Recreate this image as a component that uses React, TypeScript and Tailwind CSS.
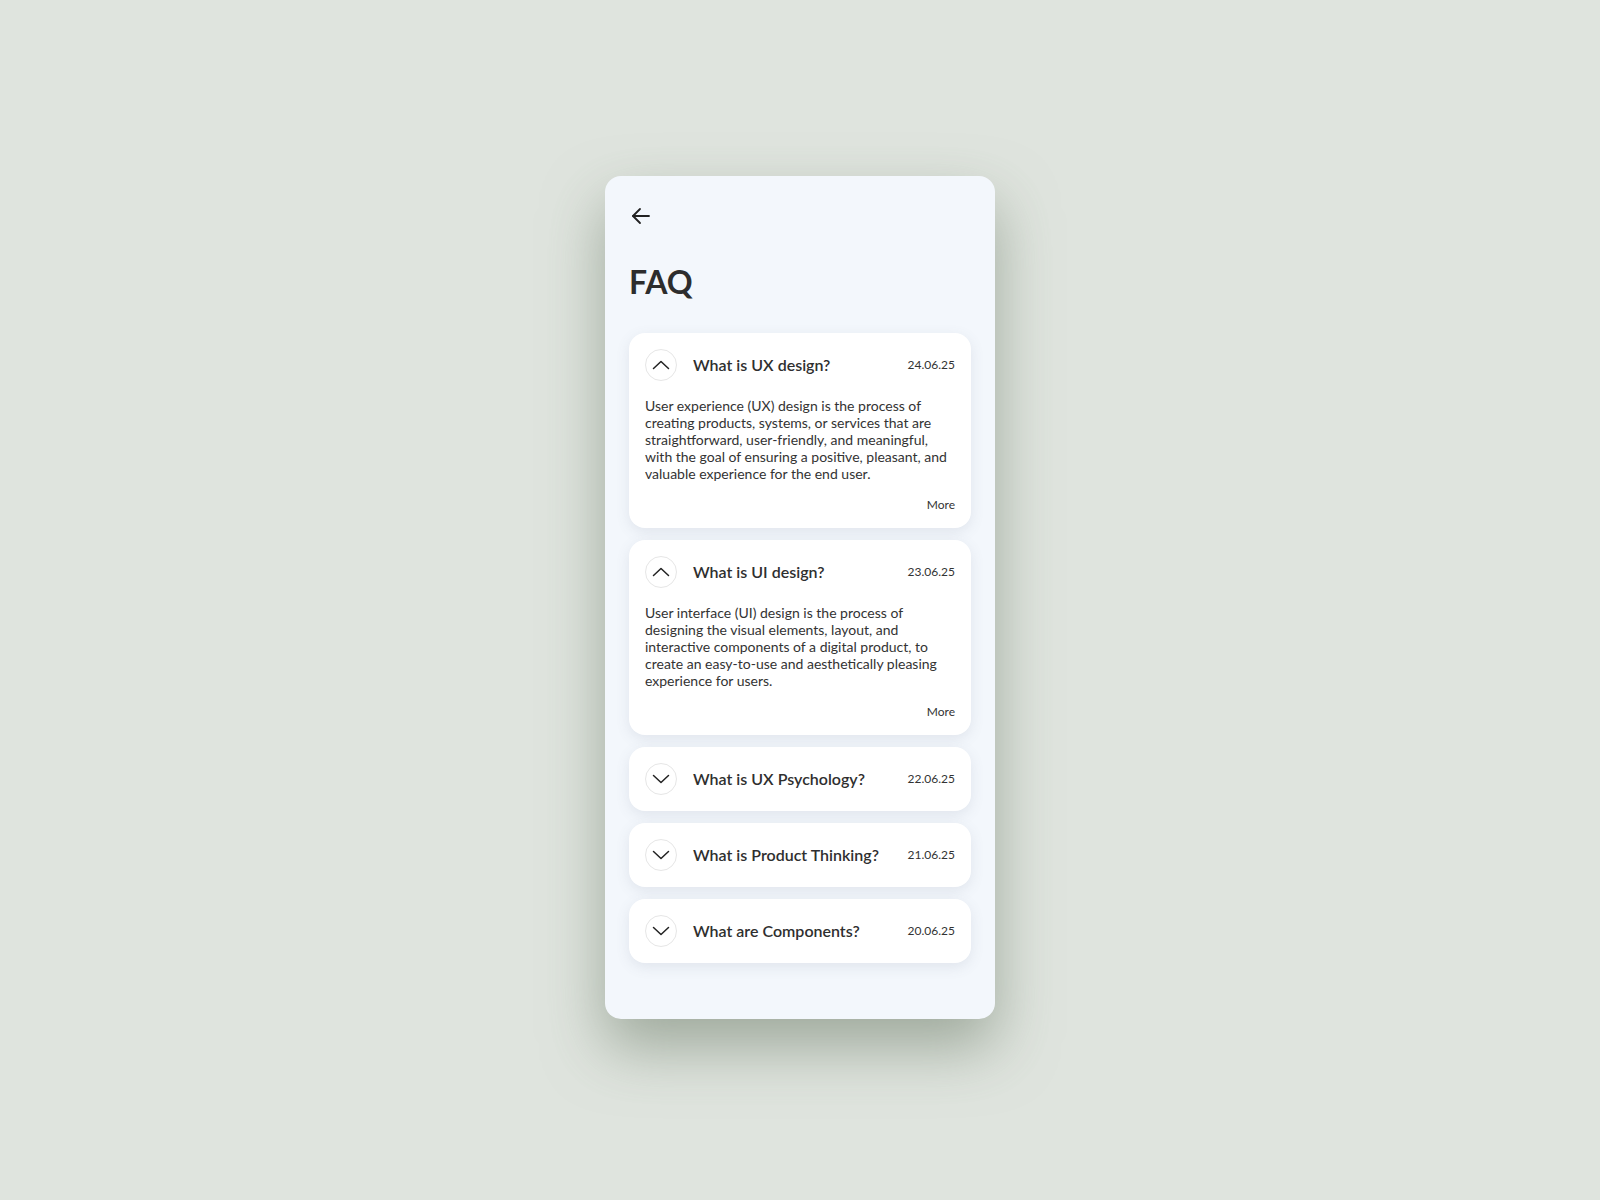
import { useState } from 'react';

type Faq = {
  question: string;
  date: string;
  answer?: string;
};

const faqs: Faq[] = [
  {
    question: 'What is UX design?',
    date: '24.06.25',
    answer:
      'User experience (UX) design is the process of creating products, systems, or services that are straightforward, user-friendly, and meaningful, with the goal of ensuring a positive, pleasant, and valuable experience for the end user.',
  },
  {
    question: 'What is UI design?',
    date: '23.06.25',
    answer:
      'User interface (UI) design is the process of designing the visual elements, layout, and interactive components of a digital product, to create an easy-to-use and aesthetically pleasing experience for users.',
  },
  { question: 'What is UX Psychology?', date: '22.06.25' },
  { question: 'What is Product Thinking?', date: '21.06.25' },
  { question: 'What are Components?', date: '20.06.25' },
];

function Chevron({ open }: { open: boolean }) {
  return (
    <svg width="18" height="10" viewBox="0 0 18 10" fill="none" stroke="#222" strokeWidth="1.5" strokeLinecap="round" strokeLinejoin="round">
      {open ? <path d="M1.5 8.5 L9 1.5 L16.5 8.5" /> : <path d="M1.5 1.5 L9 8.5 L16.5 1.5" />}
    </svg>
  );
}

function FaqItem({ item, open, onToggle }: { item: Faq; open: boolean; onToggle: () => void }) {
  return (
    <div className="bg-white rounded-2xl shadow-[0_4px_14px_rgba(90,100,120,0.12)] p-4">
      <div className="flex items-center gap-4">
        <button
          onClick={onToggle}
          className="w-8 h-8 shrink-0 rounded-full border border-[#e6e6e6] flex items-center justify-center"
        >
          <Chevron open={open} />
        </button>
        <span className="flex-1 whitespace-nowrap text-[16px] font-semibold text-[#2f2f2f] leading-none">{item.question}</span>
        <span className="text-[12px] text-[#333] leading-none">{item.date}</span>
      </div>
      {open && item.answer && (
        <>
          <p className="mt-4 text-[14px] leading-[17px] text-[#333]">{item.answer}</p>
          <div className="mt-4 text-right text-[12px] leading-[14px] text-[#333]">More</div>
        </>
      )}
    </div>
  );
}

export default function App() {
  const [openIdx, setOpenIdx] = useState<number[]>([0, 1]);

  const toggle = (i: number) =>
    setOpenIdx((prev) => (prev.includes(i) ? prev.filter((x) => x !== i) : [...prev, i]));

  return (
    <div className="min-h-[1200px] w-full bg-[#dfe4de] flex justify-center pt-[176px] font-['Lato','Noto_Sans',sans-serif]">
      <div className="w-[390px] h-[843px] bg-[#f3f7fc] rounded-2xl shadow-[0_28px_60px_rgba(115,130,112,0.6)] px-6 pt-[28px]">
        <button className="w-6 h-6 flex items-center justify-center">
          <svg width="20" height="18" viewBox="0 0 20 18" fill="none" stroke="#222" strokeWidth="1.8" strokeLinecap="round" strokeLinejoin="round">
            <path d="M18 9 H2" />
            <path d="M9 2 L2 9 L9 16" />
          </svg>
        </button>
        <h1 className="mt-[38px] text-[32px] font-bold text-[#2d2d2d] leading-none">FAQ</h1>
        <div className="mt-[35px] flex flex-col gap-3">
          {faqs.map((f, i) => (
            <FaqItem key={f.question} item={f} open={openIdx.includes(i)} onToggle={() => toggle(i)} />
          ))}
        </div>
      </div>
    </div>
  );
}
